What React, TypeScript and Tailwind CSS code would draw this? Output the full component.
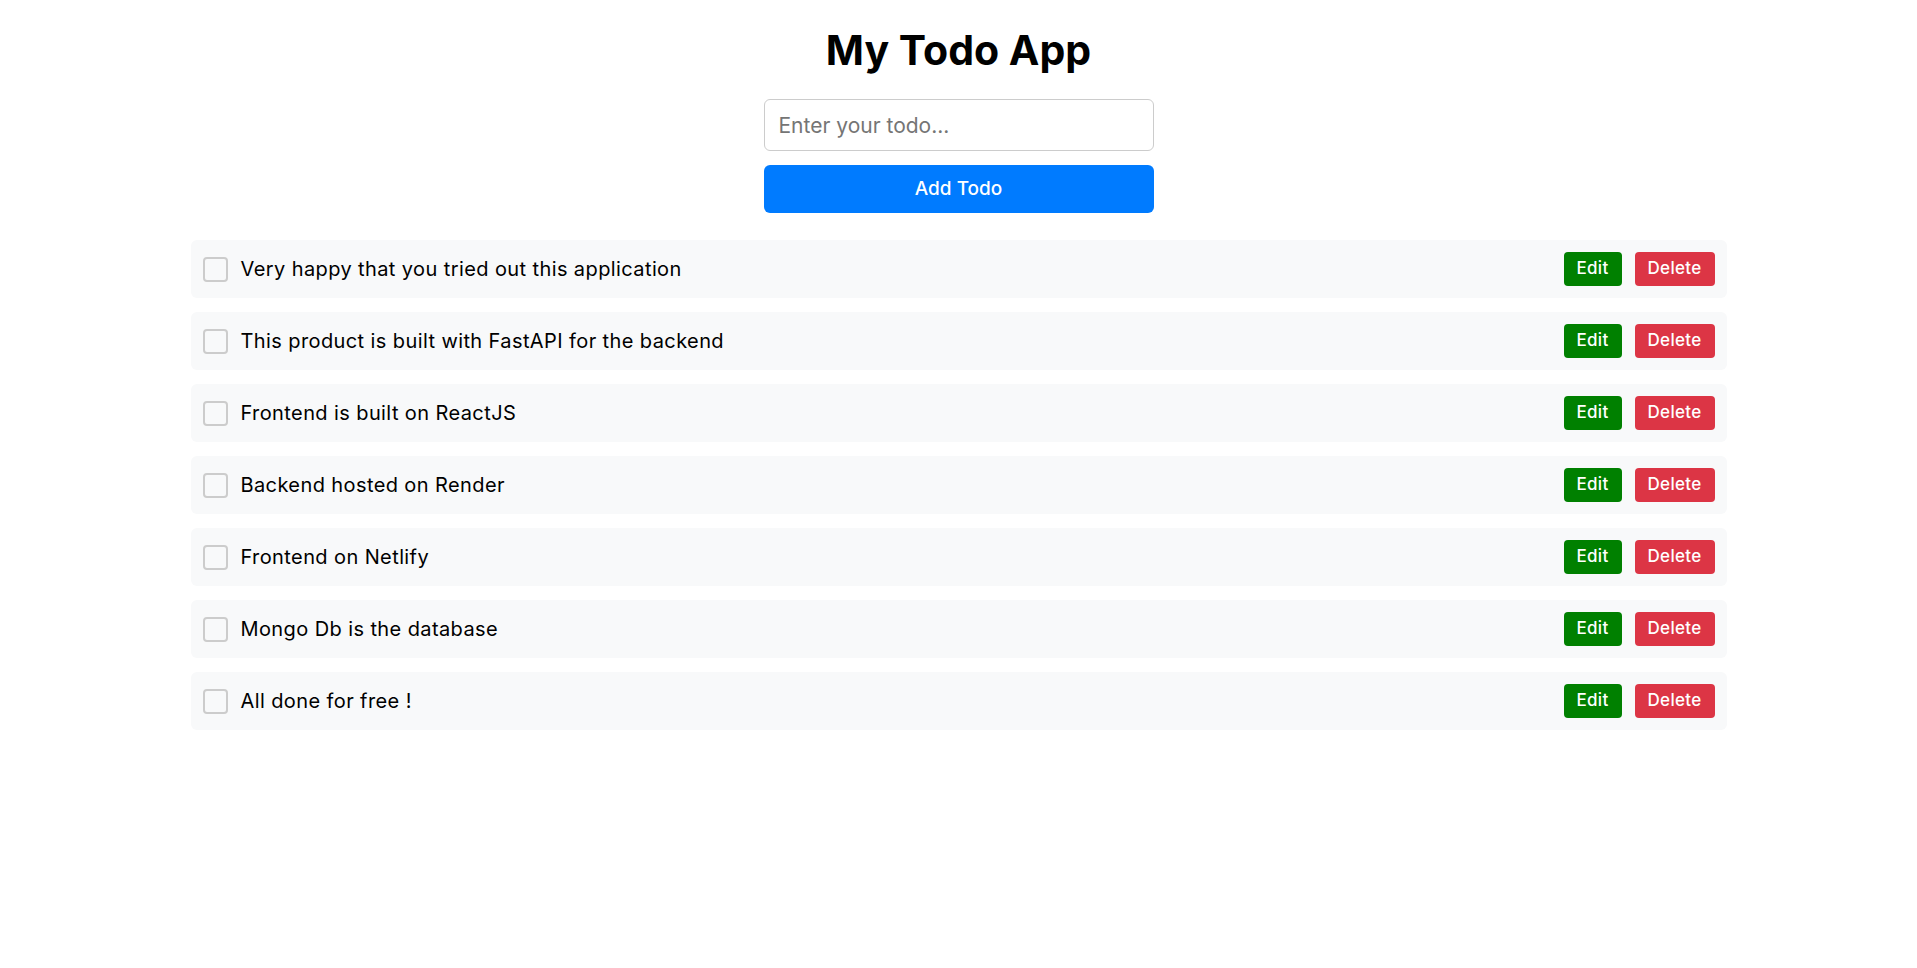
import React, { useState } from 'react';

const initialTodos = [
  'Very happy that you tried out this application',
  'This product is built with FastAPI for the backend',
  'Frontend is built on ReactJS',
  'Backend hosted on Render',
  'Frontend on Netlify',
  'Mongo Db is the database',
  'All done for free !',
];

const TodoItem: React.FC<{ text: string }> = ({ text }) => {
  return (
    <li className="h-[58px] bg-[#f8f9fa] rounded-[6px] pl-[12px] pr-[12px] flex items-center">
      <input
        type="checkbox"
        className="appearance-none w-[25px] h-[25px] border-2 border-[#cccccc] rounded-[4px] bg-transparent shrink-0"
      />
      <span className="ml-[13px] text-[20px] tracking-[0.4px] text-black flex-1">{text}</span>
      <div className="flex items-center gap-[13px]">
        <button className="h-[34px] w-[58px] rounded-[4px] bg-[#008000] text-white text-[17px] font-medium tracking-[0.3px]">
          Edit
        </button>
        <button className="h-[34px] w-[80px] rounded-[4px] bg-[#dc3545] text-white text-[17px] font-medium tracking-[0.3px]">
          Delete
        </button>
      </div>
    </li>
  );
};

const App: React.FC = () => {
  const [value, setValue] = useState('');

  return (
    <div className="min-h-screen bg-white font-['Inter',sans-serif]">
      <h1 className="pt-[25px] text-center text-[41px] leading-[51px] font-bold text-black">My Todo App</h1>

      <div className="w-[390px] mx-auto mt-[23px] flex flex-col gap-[14px]">
        <input
          value={value}
          onChange={(e) => setValue(e.target.value)}
          placeholder="Enter your todo..."
          className="h-[52px] border border-[#cccccc] rounded-[6px] px-[14px] text-[21px] placeholder:text-[#757575] outline-none"
        />
        <button className="h-[48px] bg-[#007bff] text-white rounded-[6px] text-[19px] font-medium">Add Todo</button>
      </div>

      <ul className="w-[1536px] mx-auto mt-[27px] flex flex-col gap-[14px]">
        {initialTodos.map((todo, index) => (
          <TodoItem key={index} text={todo} />
        ))}
      </ul>
    </div>
  );
};

export default App;
